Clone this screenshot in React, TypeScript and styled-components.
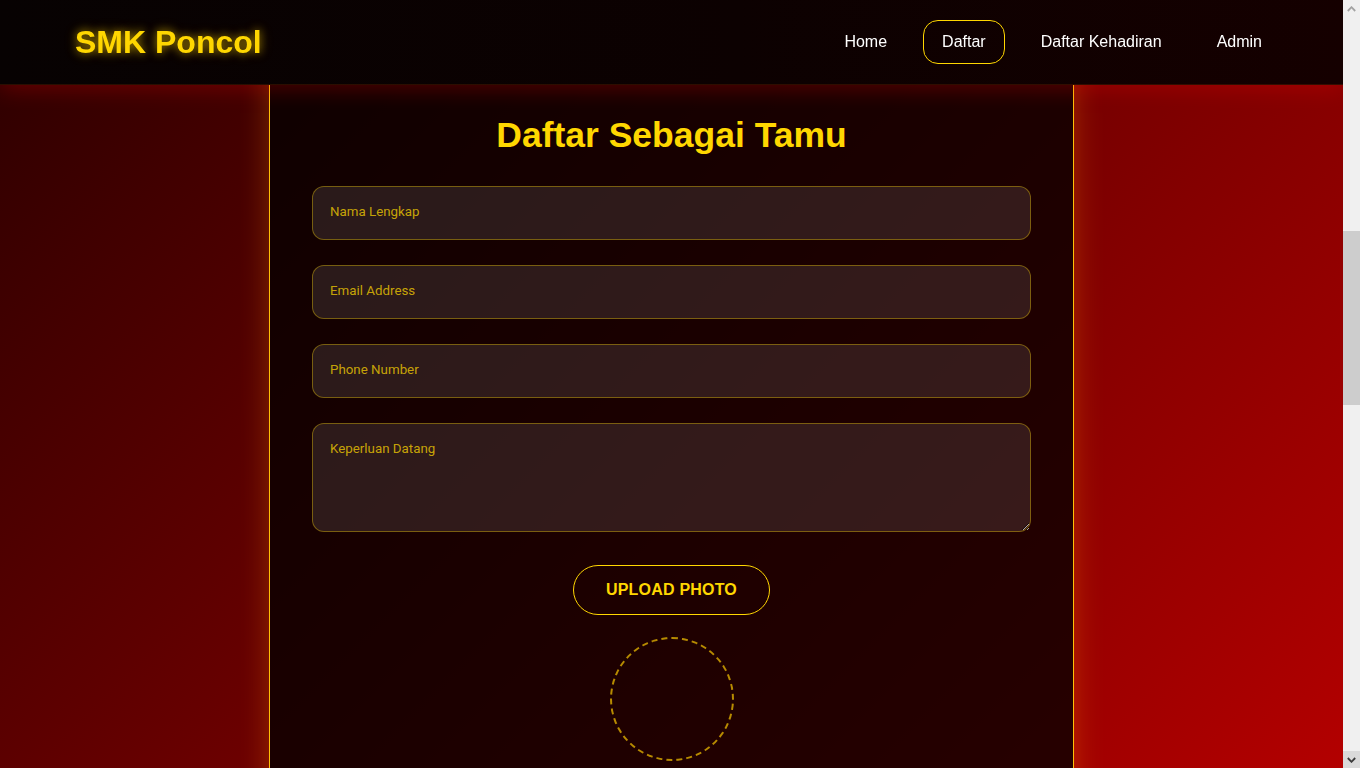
import React from "react";
import styled, { createGlobalStyle } from "styled-components";

const GlobalStyle = createGlobalStyle`
  body {
    margin: 0 17px 0 0;
    font-family: "Liberation Sans", Arial, sans-serif;
    background: linear-gradient(135deg, #2b0000 0%, #b30000 100%);
    background-attachment: fixed;
    background-size: calc(100% - 17px) 100%;
    background-repeat: no-repeat;
    background-color: #f0f0f0;
    min-height: 100vh;
  }
  * { box-sizing: border-box; }
`;

const NavBar = styled.header`
  position: fixed;
  top: 0;
  left: 0;
  right: 17px;
  height: 85px;
  z-index: 10;
  display: flex;
  align-items: center;
  justify-content: space-between;
  padding: 0 62px 0 75px;
  background: linear-gradient(to right, #070202 0%, #0c0101 55%, #150000 100%);
  border-bottom: 1px solid rgba(255, 90, 0, 0.14);
  box-shadow: 0 3px 22px rgba(255, 0, 0, 0.28);
`;

const Logo = styled.div`
  font-family: "Liberation Sans", Arial, sans-serif;
  font-weight: 700;
  font-size: 32px;
  color: #ffd700;
  text-shadow: 0 0 8px rgba(255, 215, 0, 0.55), 0 0 14px rgba(255, 200, 0, 0.3);
  margin-top: 1px;
`;

const NavList = styled.nav`
  display: flex;
  align-items: center;
  gap: 17px;
`;

const NavLink = styled.a<{ $active?: boolean }>`
  font-family: "Liberation Sans", Arial, sans-serif;
  font-size: 16px;
  color: #ffffff;
  text-decoration: none;
  padding: 12px 18px;
  border: 1px solid ${(p) => (p.$active ? "#ffd700" : "transparent")};
  border-radius: 15px;
  line-height: 18px;
  cursor: pointer;
`;

const ScrollRail = styled.div`
  position: fixed;
  top: 0;
  right: 0;
  bottom: 0;
  width: 17px;
  z-index: 20;
  background: #f0f0f0;
  display: flex;
  flex-direction: column;
`;

const ScrollArrow = styled.div<{ $shade: string }>`
  height: 17px;
  flex: none;
  display: flex;
  align-items: center;
  justify-content: center;
  background: ${(p) => p.$shade};
`;

const ScrollTrack = styled.div`
  flex: 1;
  display: flex;
  flex-direction: column;
`;

const ScrollThumb = styled.div`
  margin-top: 214px;
  height: 174px;
  background: #cdcdcd;
`;

const Main = styled.main`
  min-height: 3240px;
  display: flex;
  justify-content: center;
  padding-top: 40px;
`;

const Card = styled.section`
  width: 805px;
  align-self: flex-start;
  background: rgba(0, 0, 0, 0.76);
  border: 1px solid #ffc107;
  box-shadow: 0 0 28px rgba(255, 140, 0, 0.32);
  padding: 74px 42px 120px 42px;
  display: flex;
  flex-direction: column;
  align-items: center;
`;

const Title = styled.h1`
  margin: 0 0 31px 0;
  font-family: "Liberation Sans", Arial, sans-serif;
  font-size: 35.5px;
  line-height: 40px;
  font-weight: 700;
  color: #ffd700;
`;

const Form = styled.form`
  width: 100%;
  display: flex;
  flex-direction: column;
  align-items: center;
  gap: 25px;
`;

const fieldCss = `
  width: 100%;
  font-family: Roboto, "Noto Sans", sans-serif;
  font-size: 13.33px;
  color: #ffd700;
  background: rgba(255, 255, 255, 0.1);
  border: 1px solid rgba(255, 215, 0, 0.36);
  border-radius: 12px;
  padding: 16px 17px 20px 17px;
  outline: none;
  &::placeholder { color: rgba(255, 215, 0, 0.74); }
`;

const Input = styled.input`
  ${fieldCss}
  height: 54px;
  line-height: 16px;
`;

const TextArea = styled.textarea`
  ${fieldCss}
  padding-top: 17px;
  height: 109px;
  line-height: 16px;
  resize: vertical;
  display: block;
`;

const UploadButton = styled.button`
  margin-top: 8px;
  font-family: "Liberation Sans", Arial, sans-serif;
  font-weight: 700;
  font-size: 16px;
  letter-spacing: 0.2px;
  color: #ffd700;
  background: transparent;
  border: 1px solid #ffd700;
  border-radius: 999px;
  padding: 14px 32px;
  height: 50px;
  cursor: pointer;
`;

const PhotoPreview = styled.div`
  margin-top: -3px;
  width: 124px;
  height: 124px;
  border-radius: 50%;
  border: 2px dashed rgba(255, 205, 0, 0.68);
`;

const Chevron = ({ down, color }: { down?: boolean; color: string }) => (
  <svg width="9" height="6" viewBox="0 0 9 6">
    <path
      d={down ? "M0.8 1 L4.5 4.8 L8.2 1" : "M0.8 5 L4.5 1.2 L8.2 5"}
      fill="none"
      stroke={color}
      strokeWidth="1.8"
    />
  </svg>
);

export default function App() {
  return (
    <>
      <GlobalStyle />
      <NavBar>
        <Logo>SMK Poncol</Logo>
        <NavList>
          <NavLink>Home</NavLink>
          <NavLink $active>Daftar</NavLink>
          <NavLink>Daftar Kehadiran</NavLink>
          <NavLink>Admin</NavLink>
        </NavList>
      </NavBar>
      <ScrollRail aria-hidden>
        <ScrollArrow $shade="#f0f0f0">
          <Chevron color="#a3a3a3" />
        </ScrollArrow>
        <ScrollTrack>
          <ScrollThumb />
        </ScrollTrack>
        <ScrollArrow $shade="#dadada">
          <Chevron down color="#3c3c3c" />
        </ScrollArrow>
      </ScrollRail>
      <Main>
        <Card>
          <Title>Daftar Sebagai Tamu</Title>
          <Form onSubmit={(e) => e.preventDefault()}>
            <Input placeholder="Nama Lengkap" />
            <Input placeholder="Email Address" type="email" />
            <Input placeholder="Phone Number" type="tel" />
            <TextArea placeholder="Keperluan Datang" />
            <UploadButton type="button">UPLOAD PHOTO</UploadButton>
            <PhotoPreview />
          </Form>
        </Card>
      </Main>
    </>
  );
}
